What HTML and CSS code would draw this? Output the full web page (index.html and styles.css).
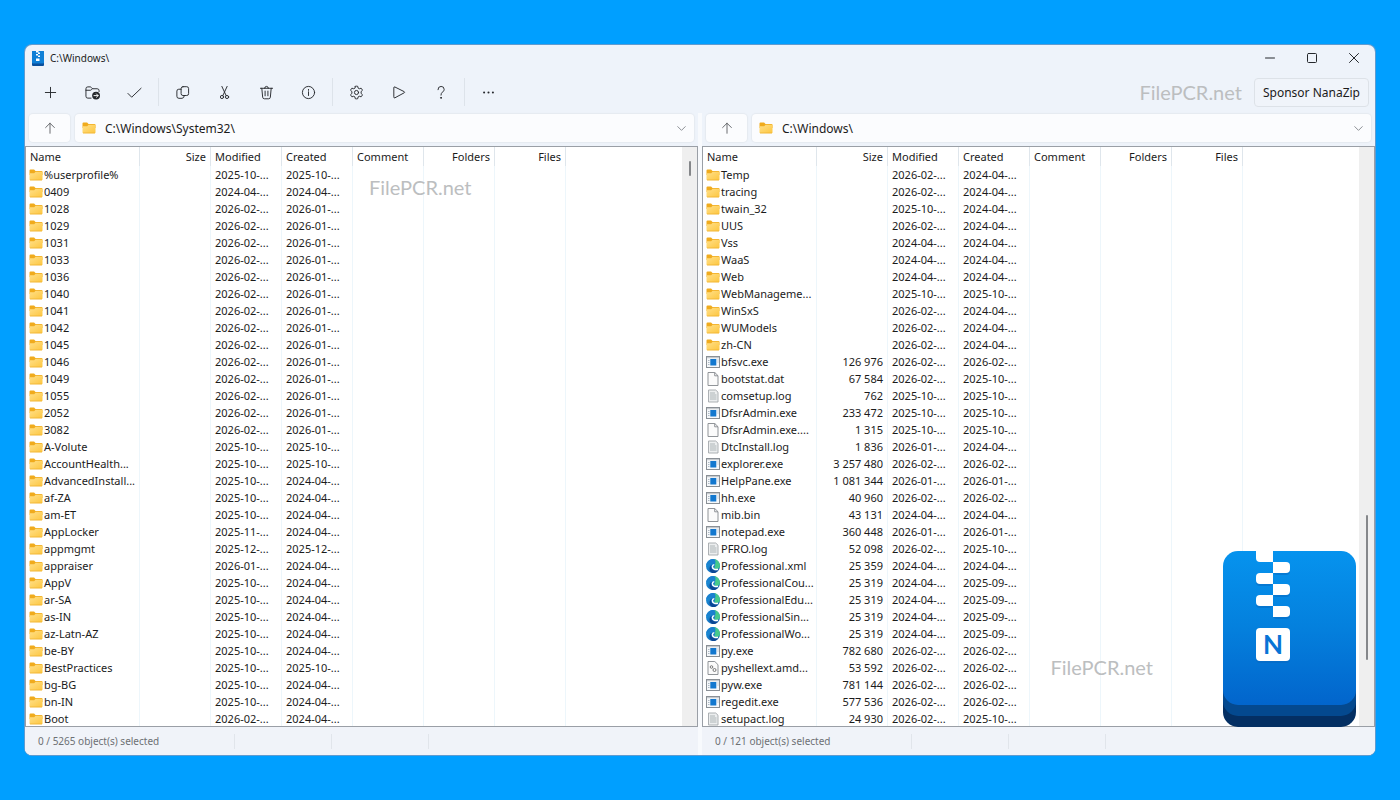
FILE: index.html
```html
<!DOCTYPE html>
<html lang="en">
<head>
<meta charset="utf-8">
<title>C:\Windows\</title>
<link rel="stylesheet" href="styles.css">
</head>
<body>
<svg class="defs" aria-hidden="true">
  <defs>
    <linearGradient id="g-logo" x1="0" y1="0" x2="0" y2="1"><stop offset="0" stop-color="#0693ee"/><stop offset=".5" stop-color="#0480dd"/><stop offset="1" stop-color="#0265cc"/></linearGradient>
    <linearGradient id="g-folder" x1="0" y1="0" x2="1" y2="1"><stop offset="0" stop-color="#ffe08a"/><stop offset="1" stop-color="#fdc63f"/></linearGradient>
    <linearGradient id="g-edge" x1="0" y1="0" x2="1" y2="1"><stop offset="0" stop-color="#1d9be0"/><stop offset="1" stop-color="#1259ae"/></linearGradient>
    <symbol id="folder" viewBox="0 0 14 12"><path d="M.5 1.500q0-1 1-1h3.600l1.400 1.400H12.500q1 0 1 1V6H.5z" fill="#f0ab1d"/><path d="M.5 4.200h4.700l1.400-1.400h6.900v7.700q0 .8-.8.8H1.300q-.8 0-.8-.8z" fill="url(#g-folder)"/><path d="M1 11h12" stroke="#eeb02c" stroke-width=".7"/></symbol>
    <symbol id="exe" viewBox="0 0 14 12"><rect x=".5" y=".5" width="13" height="11" fill="#f6f8fa" stroke="#8a9096"/><path d="M1 1.700h12" stroke="#b9bec3"/><path d="M2 4.500h1.500M2 6.500h1.500M2 8.500h1.500M11.500 4h1M11.500 6h1" stroke="#9aa9b8" stroke-width=".8"/><rect x="4.300" y="3" width="6" height="6.500" fill="#1378cf"/></symbol>
    <symbol id="file" viewBox="0 0 14 14"><path d="M2 .5h6.800l3.200 3.200v9.800H2z" fill="#fbfbfb" stroke="#85898d" stroke-width=".9"/><path d="M8.700.5v3.300H12" fill="none" stroke="#85898d" stroke-width=".9"/></symbol>
    <symbol id="log" viewBox="0 0 14 14"><path d="M2.500 1h7.200L12 3.200V13H2.500z" fill="#eceeef" stroke="#a4a8ab" stroke-width=".9"/><path d="M4 4h5M4 6h6.500M4 8h6.500M4 10h6.500" stroke="#a0a6aa" stroke-width=".8"/></symbol>
    <symbol id="dll" viewBox="0 0 14 14"><path d="M2 .5h6.800l3.200 3.200v9.800H2z" fill="#fbfbfb" stroke="#85898d" stroke-width=".9"/><circle cx="5.500" cy="6" r="1.300" fill="none" stroke="#777"/><circle cx="8.500" cy="9" r="1.500" fill="none" stroke="#777"/></symbol>
    <symbol id="edge" viewBox="0 0 14 14"><circle cx="7" cy="7" r="7" fill="url(#g-edge)"/><path d="M8 .1C11.500.6 14 3.400 14 6.800c0 2.200-1.800 3.400-3.800 3.200-1.600-.2-2.200-1-1.700-2C9.600 6.400 9.400 4 8 2.500z" fill="#45c98c"/><path d="M0 6.500C1 2 4.500-.5 8.500.2 10 2.200 9.600 4 9 5 6.500 3.300 3 4 0 6.500z" fill="#1b80cf"/><path d="M5.800 5.500C3.800 9 6.500 12.700 12.600 11.200 10.800 13.700 8.300 14.200 6.100 13.900 2.500 12 3 7.500 5.800 5.500z" fill="#0c4795"/><path d="M8.300 5.600C6 5.900 5.600 9 8 10.100q1.800.8 4 .2" fill="none" stroke="#fff" stroke-width="1.400"/></symbol>
    <symbol id="up" viewBox="0 0 16 16"><path d="M8 14V2.500M3 7.500l5-5 5 5"/></symbol>
    <symbol id="chevron" viewBox="0 0 16 16"><path d="M4 6l4 4 4-4"/></symbol>
    <symbol id="logo" viewBox="0 0 133 176">
      <rect y="22" width="133" height="154" rx="15" fill="#042f63"/>
      <rect y="11" width="133" height="154" rx="15" fill="#04498f"/>
      <rect width="133" height="154" rx="15" fill="url(#g-logo)"/>
      <g fill="#0768bf" opacity=".5"><rect x="50" y="13" width="17" height="11" rx="4"/><rect x="33" y="24" width="17" height="11" rx="4"/><rect x="50" y="35" width="17" height="11" rx="4"/><rect x="33" y="46" width="17" height="11" rx="4"/><rect x="50" y="57" width="17" height="11" rx="4"/><rect x="33" y="79" width="34" height="33" rx="4"/></g>
      <g fill="#fff"><path d="M33 0h17v11H37q-4 0-4-4z"/><path d="M50 11h13q4 0 4 4v3q0 4-4 4H50z"/><path d="M50 22H37q-4 0-4 4v3q0 4 4 4h13z"/><path d="M50 33h13q4 0 4 4v3q0 4-4 4H50z"/><path d="M50 44H37q-4 0-4 4v3q0 4 4 4h13z"/><path d="M50 55h13q4 0 4 4v3q0 4-4 4H50z"/><rect x="33" y="77" width="34" height="33" rx="4"/></g>
      <text class="logo-letter" x="50" y="103" text-anchor="middle">N</text>
    </symbol>
  </defs>
</svg>

<main class="window">
  <header class="titlebar">
    <svg class="app-icon" viewBox="0 0 12 15"><rect width="12" height="15" rx="1" fill="#0a4f9c"/><rect width="12" height="12.500" rx="1" fill="#0f7fd6"/><path d="M4 0h2.500v1.500H4zM6 1.500h2V3H6zM4 3h2v1.500H4zM6 4.500h2V6H6zM4 7.500h3.500V10H4z" fill="#fff"/></svg>
    <h1 class="title">C:\Windows\</h1>
    <div class="window-controls">
      <button class="control" aria-label="Minimize"><svg class="icon" viewBox="0 0 16 16"><path d="M3.500 8h9"/></svg></button>
      <button class="control" aria-label="Maximize"><svg class="icon" viewBox="0 0 16 16"><rect x="3.500" y="3.500" width="9" height="9" rx="1"/></svg></button>
      <button class="control" aria-label="Close"><svg class="icon" viewBox="0 0 16 16"><path d="M3.500 3.500l9 9M12.500 3.500l-9 9"/></svg></button>
    </div>
  </header>

  <nav class="toolbar" aria-label="Commands">
    <button class="tool" aria-label="Add"><svg class="icon" viewBox="0 0 16 16"><path d="M8 2.500v11M2.500 8h11"/></svg></button>
    <button class="tool" aria-label="Extract"><svg class="icon" viewBox="0 0 16 16"><path d="M6.500 14H3Q1 14 1 12V4q0-2 2-2h2.500q.8 0 1.300.7L8 4h5q2 0 2 2v1M1 5.600h4.700q.7 0 1.200-.6l1-1"/><circle cx="11.800" cy="11.300" r="4.200" fill="#25282c" stroke="none"/><path d="M9.600 11.300h4.400M12.200 9.500l1.800 1.800-1.800 1.800" stroke="#fff"/></svg></button>
    <button class="tool" aria-label="Test"><svg class="icon" viewBox="0 0 16 16"><path d="M1 9l4 4L15 3.500"/></svg></button>
    <span class="separator"></span>
    <button class="tool" aria-label="Copy"><svg class="icon" viewBox="0 0 16 16"><rect x="6.500" y="1.800" width="8" height="9.400" rx="2"/><path d="M6.500 4.500H4q-2 0-2 2V12q0 2.200 2.200 2.200H7.500q2.200 0 2.500-3"/></svg></button>
    <button class="tool" aria-label="Move"><svg class="icon" viewBox="0 0 16 16"><path d="M5.200 1.500l4.500 9.700M10.800 1.500L6.300 11.200"/><circle cx="5.300" cy="12.800" r="1.700"/><circle cx="10.700" cy="12.800" r="1.700"/></svg></button>
    <button class="tool" aria-label="Delete"><svg class="icon" viewBox="0 0 16 16"><path d="M1.500 3.500h13M6 3.500q0-2 2-2t2 2M3 3.500l.9 9.500q.2 1.700 1.800 1.700h4.600q1.600 0 1.800-1.700L13 3.500M6.500 6.500v5M9.500 6.500v5"/></svg></button>
    <button class="tool" aria-label="Info"><svg class="icon" viewBox="0 0 16 16"><circle cx="8" cy="8" r="6.500"/><path d="M8 7.200v4M8 4.700v1"/></svg></button>
    <span class="separator"></span>
    <button class="tool" aria-label="Options"><svg class="icon" viewBox="0 0 16 16"><circle cx="8" cy="8" r="2.200"/><path d="M6.700 1.400Q8 1 9.300 1.400L9.700 3.300 11 4l1.900-.6q1 .9 1.400 2.300L12.900 7v2l1.400 1.300q-.4 1.400-1.400 2.300L11 12l-1.300.7-.4 1.900Q8 15 6.700 14.600L6.300 12.700 5 12l-1.900.6q-1-.9-1.400-2.300L3.100 9V7L1.700 5.700q.4-1.400 1.400-2.300L5 4l1.300-.7z"/></svg></button>
    <button class="tool" aria-label="Benchmark"><svg class="icon" viewBox="0 0 16 16"><path d="M3 2.800q0-1.200 1.100-.7l10 5q1 .6 0 1.200l-10 5.400q-1.100.5-1.100-.7z"/></svg></button>
    <button class="tool" aria-label="Help"><svg class="icon" viewBox="0 0 16 16"><path d="M5.300 5q0-3.500 3.300-3.500T11.900 4.700Q11.900 6.300 10.200 7.500 8.500 8.700 8.500 10.800"/><circle cx="8.500" cy="13.700" r=".5" fill="#25282c"/></svg></button>
    <span class="separator"></span>
    <button class="tool" aria-label="More"><svg class="icon" viewBox="0 0 16 16"><g fill="#25282c" stroke="none"><circle cx="3.300" cy="8" r="1.100"/><circle cx="8" cy="8" r="1.100"/><circle cx="12.700" cy="8" r="1.100"/></g></svg></button>
    <span class="brand">FilePCR.net</span>
    <button class="sponsor">Sponsor NanaZip</button>
  </nav>

  <div class="panes">
    <section class="pane" aria-label="Left panel">
      <div class="address-row">
        <button class="up" aria-label="Up"><svg class="icon"><use href="#up"/></svg></button>
        <div class="address">
          <svg class="address-folder"><use href="#folder"/></svg>
          <input class="path" aria-label="Left path" value="C:\Windows\System32\">
          <button class="drop" aria-label="Left path history"><svg class="icon"><use href="#chevron"/></svg></button>
        </div>
      </div>
      <div class="list">
        <div class="table-area">
          <table class="files">
            <thead><tr><th class="name">Name</th><th class="num">Size</th><th>Modified</th><th>Created</th><th>Comment</th><th class="num">Folders</th><th class="num">Files</th></tr></thead>
            <tbody id="left"></tbody>
          </table>
        </div>
        <div class="scrollbar"><span class="thumb thumb-top"></span></div>
        <span class="brand mark-left">FilePCR.net</span>
      </div>
      <footer class="status"><span class="count">0 / 5265 object(s) selected</span><span class="slot"></span><span class="slot"></span></footer>
    </section>

    <section class="pane" aria-label="Right panel">
      <div class="address-row">
        <button class="up" aria-label="Up"><svg class="icon"><use href="#up"/></svg></button>
        <div class="address">
          <svg class="address-folder"><use href="#folder"/></svg>
          <input class="path" aria-label="Right path" value="C:\Windows\">
          <button class="drop" aria-label="Right path history"><svg class="icon"><use href="#chevron"/></svg></button>
        </div>
      </div>
      <div class="list">
        <div class="table-area">
          <table class="files">
            <thead><tr><th class="name">Name</th><th class="num">Size</th><th>Modified</th><th>Created</th><th>Comment</th><th class="num">Folders</th><th class="num">Files</th></tr></thead>
            <tbody id="right"></tbody>
          </table>
        </div>
        <div class="scrollbar"><span class="thumb thumb-bottom"></span></div>
        <span class="brand mark-right">FilePCR.net</span>
        <svg class="big-logo" role="img" aria-label="NanaZip"><use href="#logo"/></svg>
      </div>
      <footer class="status"><span class="count">0 / 121 object(s) selected</span><span class="slot"></span><span class="slot"></span></footer>
    </section>
  </div>
</main>
<script src="files.js"></script>
</body>
</html>
```

FILE: styles.css
```css
* { box-sizing: border-box; }

body {
  margin: 0;
  min-height: 100vh;
  padding: 45px 25px;
  display: flex;
  background: #009fff;
  color: #1b1b1b;
  font-family: "Noto Sans", "Open Sans", sans-serif;
  font-size: 11px;
}

button, input { font: inherit; color: inherit; }
button { padding: 0; border: 0; background: none; }

.defs { position: absolute; width: 0; height: 0; }

.window {
  flex: 1;
  min-width: 0;
  height: calc(100vh - 90px);
  display: flex;
  flex-direction: column;
  background: #eef3fa;
  border-radius: 7px;
  box-shadow: 0 0 0 1px #5f9bd0;
  overflow: hidden;
}

.icon {
  display: block;
  width: 15px;
  height: 15px;
  margin: auto;
  fill: none;
  stroke: #25282c;
  stroke-width: 1;
  stroke-linecap: round;
  stroke-linejoin: round;
}

.titlebar { display: flex; align-items: center; height: 26px; flex: none; }
.app-icon { width: 12px; height: 15px; margin-left: 7px; }
.title { flex: 1; margin: 0 6px; font-size: 10px; font-weight: 400; }
.window-controls { display: flex; }
.control { width: 42px; height: 26px; }
.control .icon { width: 16px; height: 16px; }

.toolbar { display: flex; align-items: center; height: 42px; flex: none; padding: 0 6px 0 4px; }
.tool { width: 42px; height: 30px; }
.separator { width: 1px; height: 28px; margin: 0 2px 0 3px; background: #dde3ea; }
.sponsor {
  height: 29px;
  margin-left: 12px;
  padding: 0 8px;
  border: 1px solid #dde2e8;
  border-radius: 4px;
  background: #f0f4fa;
  font-size: 12px;
}

.brand { font: 400 20px/24px Lato, sans-serif; color: #bcbec0; }
.toolbar .brand { margin-left: auto; }

.panes { flex: 1; min-height: 0; display: grid; grid-template-columns: 1fr 1fr; gap: 4px; background: #f8fafd; }
.pane { min-width: 0; min-height: 0; display: flex; flex-direction: column; background: #eef3fa; }

.address-row { display: flex; gap: 5px; height: 33px; flex: none; padding: 1px 4px 4px; }
.up, .address { border-radius: 4px; background: #fbfcfe; box-shadow: 0 0 1px 1px #e5eaf0; }
.up { width: 41px; }
.up .icon { width: 14px; height: 14px; stroke: #55585c; }
.address { flex: 1; min-width: 0; display: flex; align-items: center; }
.address-folder { width: 14px; height: 12px; margin-left: 7px; flex: none; }
.path { flex: 1; min-width: 0; height: 28px; margin-left: 9px; padding: 0; border: 0; background: none; font-size: 12px; outline: 0; }
.drop { width: 26px; height: 28px; }
.drop .icon { stroke: #85898e; }

.list { position: relative; flex: 1; min-height: 0; display: flex; border: 1px solid #9a9fa6; background: #fff; }
.table-area { flex: 1; min-width: 0; overflow: hidden; }
.files { width: 540px; table-layout: fixed; border-spacing: 0; }
.files th, .files td { width: 71px; height: 17px; padding: 0 4px; border-right: 1px solid #edf6fb; font-weight: 400; line-height: 17px; text-align: left; white-space: nowrap; overflow: hidden; }
.files th { height: 19px; border-right-color: #dfe6ec; }
.files .name { width: 114px; }
.files td.name { padding: 0 0 0 3px; }
.files .num { text-align: right; }
.entry { display: flex; align-items: center; gap: 1px; height: 17px; }
.glyph { width: 14px; height: 14px; flex: none; }

.scrollbar { width: 15px; flex: none; background: #efefef; }
.thumb { display: block; width: 2px; margin: auto; border-radius: 1px; background: #85878a; }
.thumb-top { height: 15px; margin-top: 14px; }
.thumb-bottom { height: 145px; margin-top: 368px; }

.mark-left { position: absolute; left: 343px; top: 28px; }
.mark-right { position: absolute; right: 221px; bottom: 47px; }
.big-logo { position: absolute; right: 18px; bottom: -1px; width: 133px; height: 176px; }
.logo-letter { font: 700 26px Lato, sans-serif; fill: #0874d6; }

.status { display: flex; align-items: center; height: 28px; flex: none; background: #f0f3f9; color: #6d7074; font-size: 10px; }
.count { width: 210px; height: 15px; padding-left: 13px; border-right: 1px solid #e1e5eb; line-height: 15px; }
.slot { width: 97px; height: 15px; border-right: 1px solid #e1e5eb; }
```

FILE: files.js
```js
const left = `
%userprofile%|2025-10|2025-10
0409|2024-04|2024-04
1028|2026-02|2026-01
1029|2026-02|2026-01
1031|2026-02|2026-01
1033|2026-02|2026-01
1036|2026-02|2026-01
1040|2026-02|2026-01
1041|2026-02|2026-01
1042|2026-02|2026-01
1045|2026-02|2026-01
1046|2026-02|2026-01
1049|2026-02|2026-01
1055|2026-02|2026-01
2052|2026-02|2026-01
3082|2026-02|2026-01
A-Volute|2025-10|2025-10
AccountHealth...|2025-10|2025-10
AdvancedInstall...|2025-10|2024-04
af-ZA|2025-10|2024-04
am-ET|2025-10|2024-04
AppLocker|2025-11|2024-04
appmgmt|2025-12|2025-12
appraiser|2026-01|2024-04
AppV|2025-10|2024-04
ar-SA|2025-10|2024-04
as-IN|2025-10|2024-04
az-Latn-AZ|2025-10|2024-04
be-BY|2025-10|2024-04
BestPractices|2025-10|2025-10
bg-BG|2025-10|2024-04
bn-IN|2025-10|2024-04
Boot|2026-02|2024-04`;

const right = `
Temp|2026-02|2024-04
tracing|2026-02|2024-04
twain_32|2025-10|2024-04
UUS|2026-02|2024-04
Vss|2024-04|2024-04
WaaS|2024-04|2024-04
Web|2024-04|2024-04
WebManageme...|2025-10|2025-10
WinSxS|2026-02|2024-04
WUModels|2026-02|2024-04
zh-CN|2026-02|2024-04
bfsvc.exe|2026-02|2026-02|126 976|exe
bootstat.dat|2026-02|2025-10|67 584|file
comsetup.log|2025-10|2025-10|762|log
DfsrAdmin.exe|2025-10|2025-10|233 472|exe
DfsrAdmin.exe....|2025-10|2025-10|1 315|file
DtcInstall.log|2026-01|2024-04|1 836|log
explorer.exe|2026-02|2026-02|3 257 480|exe
HelpPane.exe|2026-01|2026-01|1 081 344|exe
hh.exe|2026-02|2026-02|40 960|exe
mib.bin|2024-04|2024-04|43 131|file
notepad.exe|2026-01|2026-01|360 448|exe
PFRO.log|2026-02|2025-10|52 098|log
Professional.xml|2024-04|2024-04|25 359|edge
ProfessionalCou...|2024-04|2025-09|25 319|edge
ProfessionalEdu...|2024-04|2025-09|25 319|edge
ProfessionalSin...|2024-04|2025-09|25 319|edge
ProfessionalWo...|2024-04|2025-09|25 319|edge
py.exe|2026-02|2026-02|782 680|exe
pyshellext.amd...|2026-02|2026-02|53 592|dll
pyw.exe|2026-02|2026-02|781 144|exe
regedit.exe|2026-02|2026-02|577 536|exe
setupact.log|2026-02|2025-10|24 930|log`;

function fill(id, data) {
  document.getElementById(id).innerHTML = data.trim().split("\n").map((line) => {
    const [name, modified, created, size = "", icon = "folder"] = line.split("|");
    return `<tr><td class="name"><span class="entry"><svg class="glyph"><use href="#${icon}"/></svg>${name}</span></td>` +
      `<td class="num">${size}</td><td>${modified}-...</td><td>${created}-...</td><td></td><td></td><td></td></tr>`;
  }).join("");
}

fill("left", left);
fill("right", right);
```
